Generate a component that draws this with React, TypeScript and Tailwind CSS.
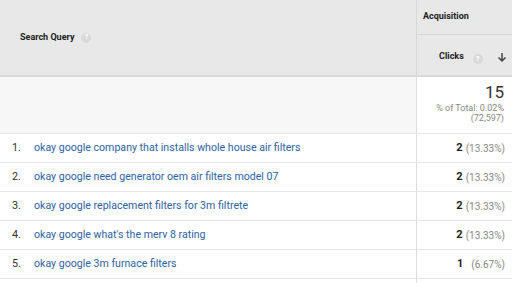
const rows = [
  { q: "okay google company that installs whole house air filters", v: "2", p: "(13.33%)" },
  { q: "okay google need generator oem air filters model 07", v: "2", p: "(13.33%)" },
  { q: "okay google replacement filters for 3m filtrete", v: "2", p: "(13.33%)" },
  { q: "okay google what's the merv 8 rating", v: "2", p: "(13.33%)" },
  { q: "okay google 3m furnace filters", v: "1", p: "(6.67%)" },
];

function Help() {
  return (
    <span className="inline-flex items-center justify-center w-[10px] h-[10px] rounded-full bg-[#d9d9d9] text-white text-[7px] font-bold leading-none">
      ?
    </span>
  );
}

export default function App() {
  return (
    <div className="w-[512px] h-[283px] overflow-hidden bg-white font-['Roboto',sans-serif] text-[10px]">
      <div className="flex h-[77px] bg-[#e8e8e8] border-b-2 border-[#d9d9d9]">
        <div className="w-[417px] border-r border-[#d6d6d6] flex items-center pl-[20px] gap-[7px]">
          <span className="font-bold text-[#222] text-[9px]">Search Query</span>
          <Help />
        </div>
        <div className="flex-1 flex flex-col">
          <div className="h-[35px] border-b border-[#d6d6d6] flex items-center pl-[6px] font-bold text-[#222] text-[9px]">
            Acquisition
          </div>
          <div className="flex-1 flex items-center pl-[22px] pr-[5px] pt-[4px]">
            <span className="font-bold text-[#222] text-[9px]">Clicks</span>
            <span className="ml-[9px]">
              <Help />
            </span>
            <svg className="ml-auto" width="10" height="11" viewBox="0 0 10 11">
              <path d="M5 1v8M1.5 5.5 5 9l3.5-3.5" stroke="#444" strokeWidth="1.5" fill="none" />
            </svg>
          </div>
        </div>
      </div>
      <div className="flex h-[56px]">
        <div className="w-[417px] bg-[#f7f7f7] border-r border-[#dedede]" />
        <div className="flex-1 flex flex-col items-end pr-[8px] pt-[7px] leading-none">
          <span className="text-[17px] text-[#333]">15</span>
          <span className="text-[9px] text-[#888] mt-[3px]">% of Total: 0.02%</span>
          <span className="text-[9px] text-[#888] mt-[1px]">(72,597)</span>
        </div>
      </div>
      {rows.map((r, i) => (
        <div key={i} className="flex h-[29px] border-t border-[#e6e6e6]">
          <div className="w-[417px] border-r border-[#dedede] flex items-center">
            <span className="w-[34px] pl-[12px] text-[#333] text-[10.8px]">{i + 1}.</span>
            <span className="text-[#2f62a3] text-[10.6px]">{r.q}</span>
          </div>
          <div className="flex-1 flex items-center justify-end pr-[7px] gap-[3px]">
            <span className="font-bold text-[#222] text-[11px]">{r.v}</span>
            <span className={`text-[#888] text-[10px] ${r.v === "1" ? "ml-[5px]" : ""}`}>{r.p}</span>
          </div>
        </div>
      ))}
      <div className="flex h-[10px] border-t border-[#e6e6e6]">
        <div className="w-[417px] border-r border-[#dedede]" />
      </div>
    </div>
  );
}
